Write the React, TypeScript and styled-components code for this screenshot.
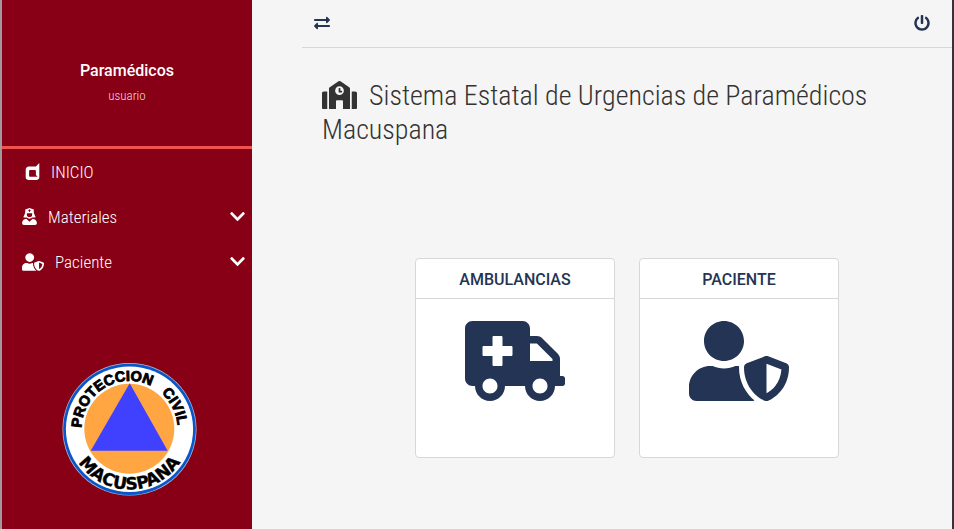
import React from "react";
import styled, { createGlobalStyle } from "styled-components";
import {
  FaAmbulance,
  FaChevronDown,
  FaDashcube,
  FaExchangeAlt,
  FaPowerOff,
  FaSchool,
  FaUserShield,
} from "react-icons/fa";

const condensed = '"Roboto Condensed", "Roboto", sans-serif';

const GlobalStyle = createGlobalStyle`
  *, *::before, *::after { box-sizing: border-box; }
  body {
    margin: 0;
    background: #f5f5f5;
    font-family: "Roboto", sans-serif;
    color: #333;
  }
  svg { display: block; }
`;

const Page = styled.div`
  display: flex;
  min-height: 100vh;
  border-left: 2px solid #a09a9c;
  border-right: 2px solid #3a3236;
`;

const Sidebar = styled.aside`
  flex: 0 0 250px;
  background: #880015;
  color: #fff;
`;

const Profile = styled.div`
  height: 149px;
  padding-top: 61px;
  border-bottom: 3px solid #ef5350;
  text-align: center;
`;

const ProfileName = styled.div`
  font-size: 16px;
  font-weight: 500;
  line-height: 20px;
`;

const ProfileRole = styled.div`
  margin-top: 7px;
  font-family: ${condensed};
  font-size: 13px;
  font-weight: 300;
  line-height: 16px;
  color: #f6d5d9;
`;

const Menu = styled.nav`
  display: flex;
  flex-direction: column;
`;

const itemStyle = `
  display: flex;
  align-items: center;
  width: 100%;
  height: 45px;
  border: 0;
  background: none;
  color: #fff;
  font-family: ${condensed};
  font-size: 17px;
  font-weight: 300;
  line-height: 20px;
  text-align: left;
  text-decoration: none;
`;

const MenuLink = styled.a`
  ${itemStyle}
  gap: 10px;
  padding: 0 6px 0 22px;
`;

const MenuButton = styled.button`
  ${itemStyle}
  gap: 11px;
  padding: 0 6px 0 20px;
  cursor: pointer;
`;

const Label = styled.span`
  flex: 1;
`;

const NurseGlyph = styled.svg`
  width: 15px;
  height: 17px;
  fill: currentColor;
`;

const Emblem = styled.svg`
  width: 136px;
  height: 134px;
  margin: 78px 0 32px 60px;
`;

const Main = styled.main`
  flex: 1;
  min-width: 0;
  padding-left: 50px;
`;

const TopBar = styled.header`
  display: flex;
  align-items: center;
  justify-content: space-between;
  height: 48px;
  padding: 0 22px 2px 12px;
  border-bottom: 1px solid #d7d7d7;
`;

const IconButton = styled.button`
  padding: 0;
  border: 0;
  background: none;
  color: #243454;
  cursor: pointer;
`;

const Title = styled.h1`
  margin: 0;
  padding: 31px 20px 0;
  font-family: ${condensed};
  font-size: 28px;
  font-weight: 300;
  line-height: 34px;

  svg {
    display: inline-block;
    width: 35px;
    height: 28px;
    margin-right: 12px;
    vertical-align: -4px;
  }
`;

const Tiles = styled.section`
  display: flex;
  flex-wrap: wrap;
  justify-content: center;
  gap: 24px;
  padding: 111px 20px 70px;
`;

const Tile = styled.a`
  width: 200px;
  height: 200px;
  border: 1px solid #d5d7d9;
  border-radius: 4px;
  background: #fff;
  color: #243454;
  text-decoration: none;
`;

const TileTitle = styled.div`
  height: 40px;
  padding-top: 11px;
  border-bottom: 1px solid #d5d7d9;
  font-size: 16px;
  font-weight: 500;
  line-height: 20px;
  text-align: center;
`;

const TileIcon = styled.div`
  display: flex;
  justify-content: center;
  padding-top: 12px;
`;

function NurseIcon() {
  return (
    <NurseGlyph viewBox="0 0 448 512" aria-hidden="true">
      <path d="M57.78 288h82.36c22.51 19.68 51.62 32 83.86 32s61.35-12.32 83.86-32h82.36a16 16 0 0 0 14.28-23.18c-15.23-29.85-31.28-62.23-42.15-95.54C354.78 146.09 352 121.59 352 97.2V48L224 0 96 48v49.2c0 24.39-2.75 48.89-10.33 72.08C74.78 202.59 58.73 235 43.5 264.82A16 16 0 0 0 57.78 288zM184 71.67a5 5 0 0 1 5-5h21.67V45a5 5 0 0 1 5-5h16.66a5 5 0 0 1 5 5v21.67H259a5 5 0 0 1 5 5v16.66a5 5 0 0 1-5 5h-21.67V115a5 5 0 0 1-5 5h-16.66a5 5 0 0 1-5-5V93.33H189a5 5 0 0 1-5-5zM144 160h160v32a80 80 0 0 1-160 0zm175.41 160L224 415.39 128.59 320C57.1 323.1 0 381.6 0 453.79A58.21 58.21 0 0 0 58.21 512h331.58A58.21 58.21 0 0 0 448 453.79c0-72.19-57.1-130.69-128.59-133.79z" />
    </NurseGlyph>
  );
}

function CivilProtectionEmblem() {
  return (
    <Emblem viewBox="0 0 136 134" role="img" aria-label="Protección Civil Macuspana">
      <defs>
        <path id="arc-top" d="M19.6 70 A48 48 0 1 1 115.4 70" />
        <path id="arc-bottom" d="M6.5 67 A61 60.5 0 0 0 128.5 67" />
      </defs>
      <ellipse cx="67.5" cy="67.3" rx="67" ry="66.3" fill="#a9bfdc" />
      <ellipse cx="67.5" cy="67.3" rx="66.3" ry="65.6" fill="#0a55c8" />
      <ellipse cx="67.5" cy="67.3" rx="63.6" ry="62.8" fill="#fff" />
      <circle cx="67.3" cy="66.8" r="45" fill="#ffa642" />
      <path d="M67.7 21.3 105.7 88.7H28.7z" fill="#4040ff" />
      <g fontFamily="'Liberation Sans', sans-serif" fontWeight="700" fontSize="14.5" fill="#000" stroke="#000" strokeWidth="0.9">
        <text>
          <textPath href="#arc-top" startOffset="4">PROTECCION</textPath>
        </text>
        <text>
          <textPath href="#arc-top" startOffset="113">CIVIL</textPath>
        </text>
      </g>
      <text fontFamily="'DejaVu Sans', sans-serif" fontWeight="700" fontSize="17" textAnchor="middle" fill="#000" stroke="#000" strokeWidth="0.4">
        <textPath href="#arc-bottom" startOffset="50%">MACUSPANA</textPath>
      </text>
    </Emblem>
  );
}

const tiles = [
  { title: "AMBULANCIAS", Icon: FaAmbulance },
  { title: "PACIENTE", Icon: FaUserShield },
];

export default function App() {
  return (
    <>
      <GlobalStyle />
      <Page>
        <Sidebar>
          <Profile>
            <ProfileName>Paramédicos</ProfileName>
            <ProfileRole>usuario</ProfileRole>
          </Profile>
          <Menu>
            <MenuLink href="#inicio">
              <FaDashcube size={17} />
              <Label>INICIO</Label>
            </MenuLink>
            <MenuButton type="button">
              <NurseIcon />
              <Label>Materiales</Label>
              <FaChevronDown size={17} />
            </MenuButton>
            <MenuButton type="button">
              <FaUserShield size={22} />
              <Label>Paciente</Label>
              <FaChevronDown size={17} />
            </MenuButton>
          </Menu>
          <CivilProtectionEmblem />
        </Sidebar>
        <Main>
          <TopBar>
            <IconButton type="button" aria-label="Mostrar menú">
              <FaExchangeAlt size={16} />
            </IconButton>
            <IconButton type="button" aria-label="Cerrar sesión">
              <FaPowerOff size={16} />
            </IconButton>
          </TopBar>
          <Title>
            <FaSchool />
            Sistema Estatal de Urgencias de Paramédicos Macuspana
          </Title>
          <Tiles>
            {tiles.map(({ title, Icon }) => (
              <Tile key={title} href={`#${title.toLowerCase()}`}>
                <TileTitle>{title}</TileTitle>
                <TileIcon>
                  <Icon size={100} />
                </TileIcon>
              </Tile>
            ))}
          </Tiles>
        </Main>
      </Page>
    </>
  );
}
